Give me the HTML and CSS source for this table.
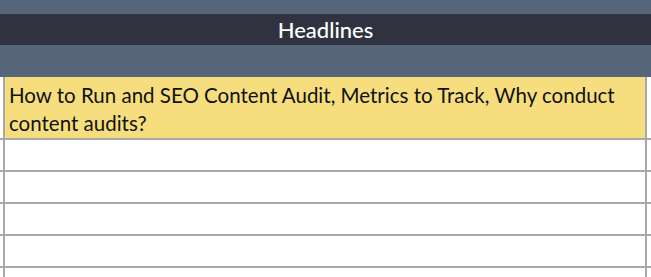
FILE: index.html
```html
<!DOCTYPE html>
<html lang="en">
<head>
  <meta charset="UTF-8" />
  <title>Content Audit</title>
  <link rel="stylesheet" href="styles.css">
</head>
<body>
  <div class="sheet">
    <div class="band"></div>
    <div class="title">Headlines</div>
    <div class="band tall"></div>

    <!-- rows -->
    <div class="grid">
      <div class="cell"></div>
      <div class="cell highlight">How to Run and SEO Content Audit, Metrics to Track, Why conduct content audits?</div>
      <div class="cell"></div>

      <div class="cell"></div><div class="cell"></div><div class="cell"></div>
      <div class="cell"></div><div class="cell"></div><div class="cell"></div>
      <div class="cell"></div><div class="cell"></div><div class="cell"></div>
      <div class="cell"></div><div class="cell"></div><div class="cell"></div>
      <div class="cell"></div><div class="cell"></div><div class="cell"></div>
    </div>
  </div>
</body>
</html>
```

FILE: styles.css
```css
body {
  margin: 0;
  background-color: #fff;
  font-family: Lato, "Open Sans", sans-serif;
}

.sheet {
  width: 651px;
  height: 277px;
  overflow: hidden;
}

.band {
  height: 14px;
  background-color: #566579;
}

.band.tall {
  height: 32px;
}

.title {
  height: 31px;
  line-height: 31px;
  background-color: #30333f;
  color: #fff;
  text-align: center;
  font-size: 22px;
  font-weight: 500;
}

.grid {
  display: grid;
  grid-template-columns: 3px 640px 4px;
  grid-template-rows: 61px repeat(5, 30px);
  gap: 2px;
  background-color: #a8a8a8;
}

.cell {
  background-color: #fff;
}

.cell.highlight {
  background-color: #f6de7f;
  color: #111;
  font-size: 20.5px;
  line-height: 28px;
  padding: 4px 4px 0 4px;
}
```
